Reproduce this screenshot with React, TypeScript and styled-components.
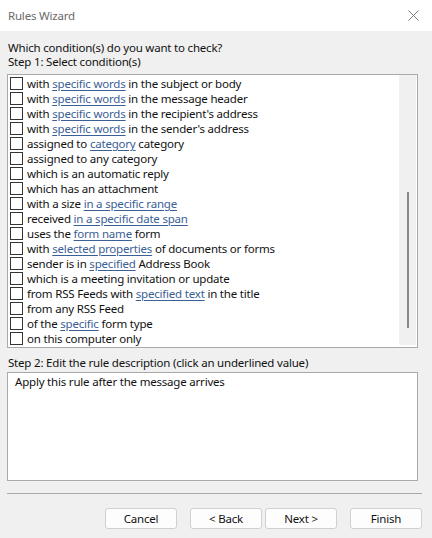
import React from "react";
import styled, { createGlobalStyle } from "styled-components";

const GlobalStyle = createGlobalStyle`
  html, body {
    margin: 0;
    padding: 0;
    background: #f0f0f0;
  }
  * {
    box-sizing: border-box;
  }
`;

const Window = styled.div`
  width: 432px;
  height: 538px;
  background: #f0f0f0;
  display: flex;
  flex-direction: column;
  font-family: "Noto Sans", "Open Sans", sans-serif;
  font-size: 11.5px;
  letter-spacing: -0.2px;
  color: #111;
  overflow: hidden;
`;

const TitleBar = styled.div`
  height: 31px;
  background: #ffffff;
  display: flex;
  align-items: center;
  justify-content: space-between;
  padding: 0 13px 0 8px;
  color: #6a6a6a;
`;

const Body = styled.div`
  display: flex;
  flex-direction: column;
  padding: 10px 14px 0 7px;
`;

const Label = styled.div<{ $top?: number }>`
  line-height: 14px;
  padding-left: 1px;
  margin-top: ${(p) => p.$top ?? 0}px;
  white-space: nowrap;
`;

const ListBox = styled.div`
  margin-top: 5px;
  height: 274px;
  border: 1px solid #a9a9a9;
  background: #ffffff;
  display: flex;
`;

const Rows = styled.div`
  flex: 1;
  display: flex;
  flex-direction: column;
  padding: 1px 0 0 2px;
`;

const Row = styled.div`
  height: 15px;
  display: flex;
  align-items: center;
  white-space: nowrap;
`;

const CheckBox = styled.span`
  width: 13px;
  height: 13px;
  border: 1px solid #333;
  background: #fff;
  flex-shrink: 0;
  margin-right: 4px;
`;

const Link = styled.span`
  color: #3a6096;
  text-decoration: underline;
  text-underline-offset: 2px;
`;

const ScrollTrack = styled.div`
  width: 17px;
  height: 270px;
  background: #f0f0f0;
  display: flex;
  justify-content: center;
  padding-top: 117px;
  margin-right: 1px;
`;

const ScrollThumb = styled.div`
  width: 2px;
  height: 136px;
  background: #8a8a8a;
`;

const DescBox = styled.div`
  margin-top: 2px;
  height: 109px;
  border: 1px solid #a9a9a9;
  background: #ffffff;
  padding: 2px 7px;
  line-height: 14px;
`;

const Footer = styled.div`
  display: flex;
  flex-direction: column;
  padding: 0 10px 0 7px;
`;

const Separator = styled.div`
  margin-top: 12px;
  height: 1px;
  background: #a9a9a9;
`;

const ButtonRow = styled.div`
  display: flex;
  justify-content: flex-end;
  margin-top: 14px;
`;

const Button = styled.button<{ $gap: number }>`
  width: 72px;
  height: 21px;
  margin-left: ${(p) => p.$gap}px;
  border: 1px solid #d0d0d0;
  border-radius: 3px;
  background: #fdfdfd;
  font-family: inherit;
  font-size: 11.5px;
  letter-spacing: -0.2px;
  color: #111;
  padding: 0;
`;

type Part = string | { link: string };

const conditions: Part[][] = [
  ["with ", { link: "specific words" }, " in the subject or body"],
  ["with ", { link: "specific words" }, " in the message header"],
  ["with ", { link: "specific words" }, " in the recipient's address"],
  ["with ", { link: "specific words" }, " in the sender's address"],
  ["assigned to ", { link: "category" }, " category"],
  ["assigned to any category"],
  ["which is an automatic reply"],
  ["which has an attachment"],
  ["with a size ", { link: "in a specific range" }],
  ["received ", { link: "in a specific date span" }],
  ["uses the ", { link: "form name" }, " form"],
  ["with ", { link: "selected properties" }, " of documents or forms"],
  ["sender is in ", { link: "specified" }, " Address Book"],
  ["which is a meeting invitation or update"],
  ["from RSS Feeds with ", { link: "specified text" }, " in the title"],
  ["from any RSS Feed"],
  ["of the ", { link: "specific" }, " form type"],
  ["on this computer only"],
];

function CloseIcon() {
  return (
    <svg width="11" height="11" viewBox="0 0 11 11">
      <path d="M0.5 0.5 L10.5 10.5 M10.5 0.5 L0.5 10.5" stroke="#7a7a7a" strokeWidth="1" fill="none" />
    </svg>
  );
}

export default function App() {
  return (
    <Window>
      <GlobalStyle />
      <TitleBar>
        <span>Rules Wizard</span>
        <CloseIcon />
      </TitleBar>
      <Body>
        <Label>Which condition(s) do you want to check?</Label>
        <Label>Step 1: Select condition(s)</Label>
        <ListBox>
          <Rows>
            {conditions.map((parts, i) => (
              <Row key={i}>
                <CheckBox />
                <span>
                  {parts.map((p, j) =>
                    typeof p === "string" ? (
                      <React.Fragment key={j}>{p}</React.Fragment>
                    ) : (
                      <Link key={j}>{p.link}</Link>
                    )
                  )}
                </span>
              </Row>
            ))}
          </Rows>
          <ScrollTrack>
            <ScrollThumb />
          </ScrollTrack>
        </ListBox>
        <Label $top={8}>Step 2: Edit the rule description (click an underlined value)</Label>
        <DescBox>Apply this rule after the message arrives</DescBox>
      </Body>
      <Footer>
        <Separator />
        <ButtonRow>
          <Button $gap={0}>Cancel</Button>
          <Button $gap={13}>&lt; Back</Button>
          <Button $gap={3}>Next &gt;</Button>
          <Button $gap={13}>Finish</Button>
        </ButtonRow>
      </Footer>
    </Window>
  );
}
